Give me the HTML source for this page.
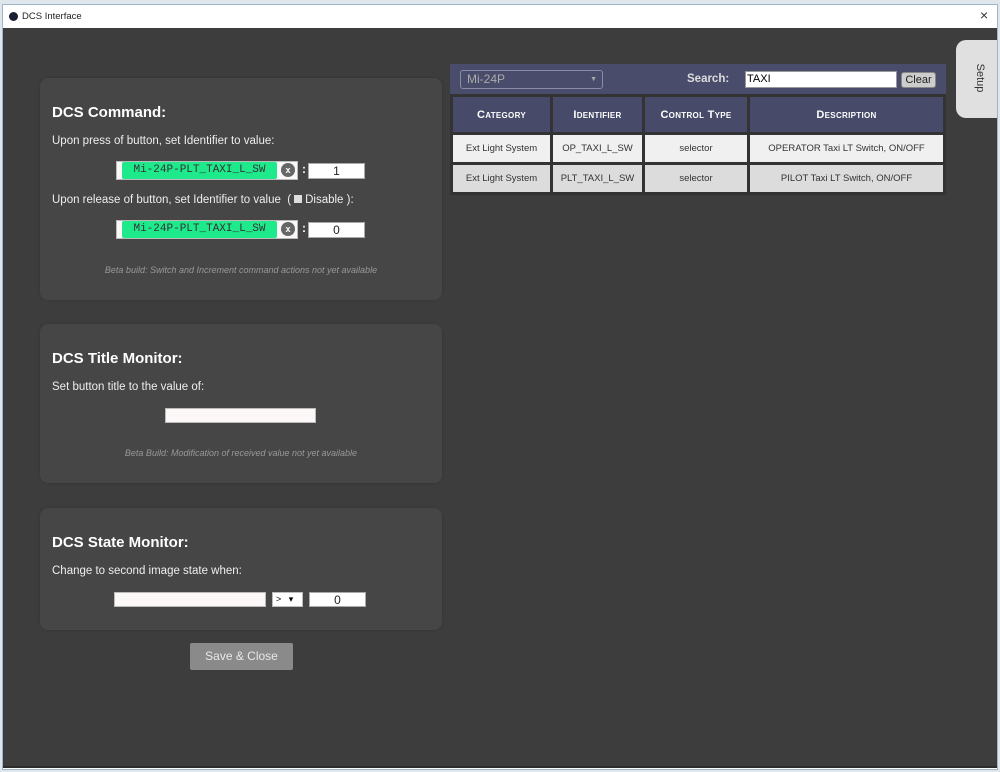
<!DOCTYPE html>
<html><head><meta charset="utf-8"><style>
*{box-sizing:border-box;margin:0;padding:0}
body{width:1000px;height:772px;background:#dfe6ec;position:relative;overflow:hidden;font-family:"Liberation Sans",sans-serif}
.abs{position:absolute}
.win{left:2px;top:4px;width:996px;height:766px;border:1px solid #9fb6c9;background:#fff}
.title{left:3px;top:5px;width:994px;height:23px;background:#fff;font-size:9.5px;color:#222}
.main{left:3px;top:28px;width:994px;height:740px;background:#3d3d3d;border-bottom:2px solid #2c2c2c}
.panel{background:#464646;border-radius:8px;left:40px;width:402px;box-shadow:0 0 2px #333}
h2{position:absolute;left:12px;color:#fff;font-size:15px;font-weight:bold}
.lbl{position:absolute;left:12px;color:#eee;font-size:11.5px}
.note{position:absolute;left:0;width:402px;text-align:center;color:#999;font-size:9px;font-style:italic}
.wbox{background:#fdf8f8;border:1px solid #bbb}
.tag{background:#1ee98b;color:#333;font-family:"Liberation Mono",monospace;font-size:11px;text-align:center;line-height:17px;border-radius:2px}
.xc{width:14px;height:14px;border-radius:50%;background:#666;color:#fff;font-size:9px;text-align:center;line-height:14px;font-weight:bold}
.val{background:#fff;border:1px solid #aaa;font-size:12px;text-align:center;line-height:14px;color:#222}
table{border-collapse:separate;border-spacing:3px;background:#333}
th{background:#474a68;color:#fff;font-size:11px;font-variant:small-caps;font-weight:bold;height:35px;letter-spacing:.3px}
td{font-size:9.5px;color:#333;text-align:center;height:27px}
tr.r1 td{background:#f0f0f0}tr.r2 td{background:#dcdcdc}
</style></head><body>
<div class="abs win"></div>
<div class="abs title"><div class="abs" style="left:6px;top:7px;width:9px;height:9px;border-radius:50%;background:#1a1f33"></div><div class="abs" style="left:19px;top:6px">DCS Interface</div><div class="abs" style="left:977px;top:2px;font-size:14px;color:#333">×</div></div>
<div class="abs main"></div>

<div class="abs panel" style="top:78px;height:222px">
<h2 style="top:26px">DCS Command:</h2>
<div class="lbl" style="top:57px">Upon press of button, set Identifier to value:</div>
<div class="abs wbox" style="left:76px;top:83px;width:182px;height:19px"></div>
<div class="abs tag" style="left:82px;top:84px;width:155px;height:17px">Mi-24P-PLT_TAXI_L_SW</div>
<div class="abs xc" style="left:241px;top:85px">x</div>
<div class="abs" style="left:262px;top:84px;color:#fff;font-size:12px;font-weight:bold">:</div>
<div class="abs val" style="left:268px;top:85px;width:57px;height:16px">1</div>
<div class="lbl" style="top:116px">Upon release of button, set Identifier to value &nbsp;(<span style="display:inline-block;width:8px;height:8px;background:#ddd;margin:0 3px"></span>Disable ):</div>
<div class="abs wbox" style="left:76px;top:142px;width:182px;height:19px"></div>
<div class="abs tag" style="left:82px;top:143px;width:155px;height:17px">Mi-24P-PLT_TAXI_L_SW</div>
<div class="abs xc" style="left:241px;top:144px">x</div>
<div class="abs" style="left:262px;top:143px;color:#fff;font-size:12px;font-weight:bold">:</div>
<div class="abs val" style="left:268px;top:144px;width:57px;height:16px">0</div>
<div class="note" style="top:187px">Beta build: Switch and Increment command actions not yet available</div>
</div>

<div class="abs panel" style="top:324px;height:159px">
<h2 style="top:26px">DCS Title Monitor:</h2>
<div class="lbl" style="top:57px">Set button title to the value of:</div>
<div class="abs wbox" style="left:125px;top:84px;width:151px;height:15px"></div>
<div class="note" style="top:124px">Beta Build: Modification of received value not yet available</div>
</div>

<div class="abs panel" style="top:508px;height:122px">
<h2 style="top:26px">DCS State Monitor:</h2>
<div class="lbl" style="top:57px">Change to second image state when:</div>
<div class="abs wbox" style="left:74px;top:84px;width:152px;height:15px"></div>
<div class="abs wbox" style="left:232px;top:84px;width:31px;height:15px;background:#fff;font-size:9px;line-height:13px;padding-left:3px">&gt; &nbsp;&nbsp;▾</div>
<div class="abs val" style="left:269px;top:84px;width:57px;height:15px">0</div>
</div>

<div class="abs" style="left:190px;top:643px;width:103px;height:27px;background:#8a8a8a;border-radius:2px;color:#e8e8e8;font-size:12px;text-align:center;line-height:27px">Save &amp; Close</div>

<div class="abs" style="left:450px;top:64px;width:496px;height:30px;background:#4a4c6c"></div>
<div class="abs" style="left:460px;top:70px;width:143px;height:19px;border:1px solid #8a8ca6;border-radius:3px;color:#aaa;font-size:12px;line-height:17px;padding-left:6px">Mi-24P<span style="position:absolute;right:5px;font-size:7px">▼</span></div>
<div class="abs" style="left:687px;top:73px;color:#ddd;font-size:11.5px;font-weight:bold">Search:</div>
<div class="abs" style="left:745px;top:71px;width:152px;height:17px;background:#fff;border:1px solid #999;font-size:11px;line-height:15px;padding-left:1px">TAXI</div>
<div class="abs" style="left:901px;top:72px;width:35px;height:16px;background:#ccc;border:1px solid #888;border-radius:3px;font-size:11px;text-align:center;line-height:14px;color:#222">Clear</div>
<table class="abs" style="left:450px;top:94px;width:496px">
<tr><th style="width:97px">Category</th><th style="width:89px">Identifier</th><th style="width:102px">Control Type</th><th>Description</th></tr>
<tr class="r1"><td>Ext Light System</td><td>OP_TAXI_L_SW</td><td>selector</td><td>OPERATOR Taxi LT Switch, ON/OFF</td></tr>
<tr class="r2"><td>Ext Light System</td><td>PLT_TAXI_L_SW</td><td>selector</td><td>PILOT Taxi LT Switch, ON/OFF</td></tr>
</table>

<div class="abs" style="left:956px;top:40px;width:41px;height:78px;background:#e0e0e0;border-radius:10px 0 0 10px"></div>
<div class="abs" style="left:962px;top:72px;width:36px;font-size:11px;color:#333;transform:rotate(90deg);transform-origin:center;text-align:center">Setup</div>
</body></html>
